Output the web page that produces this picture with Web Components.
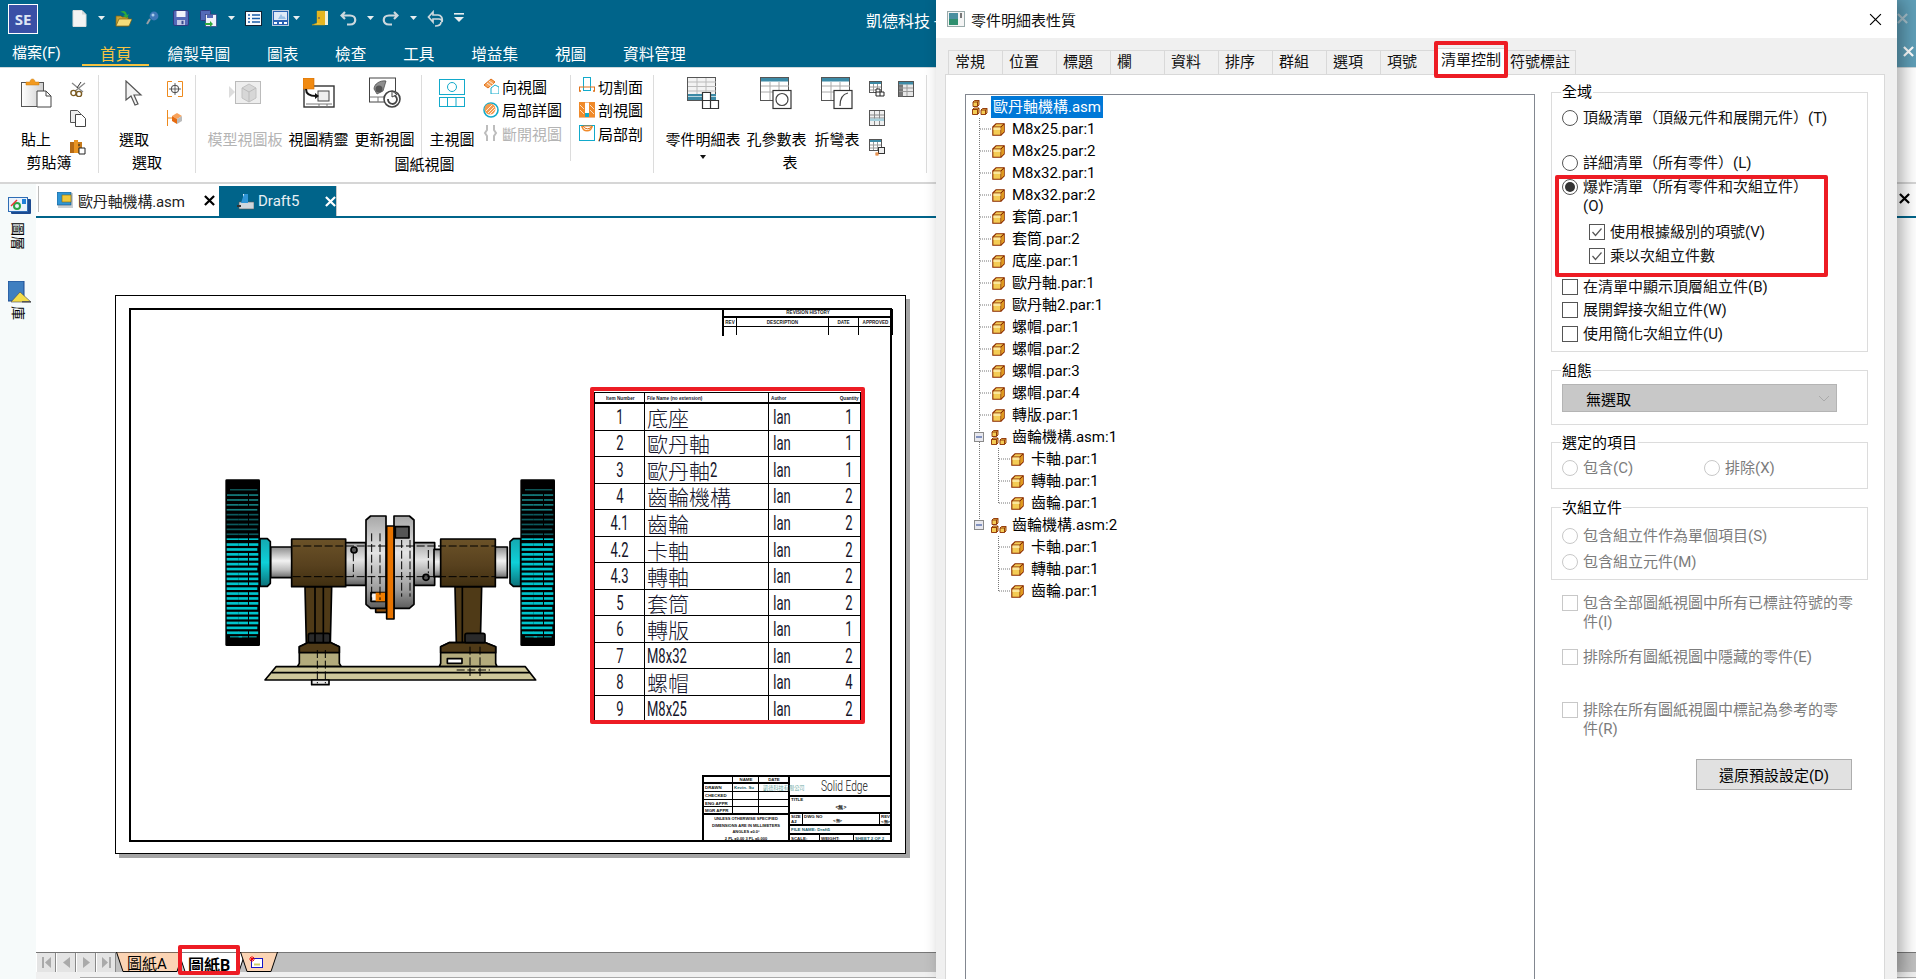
<!DOCTYPE html>
<html lang="zh-Hant">
<head>
<meta charset="utf-8">
<title>Solid Edge</title>
<style>
  html, body { margin: 0; height: 100%; overflow: hidden; background: #fff; }
  body { font-family: Roboto, "Noto Sans CJK TC", sans-serif; font-size: 15px; color: #000; }
</style>
</head>
<body>
<se-app></se-app>
<props-dialog></props-dialog>

<script>
const RED = "#ed1c24";
const TEAL = "#00648a";

// small cube used by the assembly tree icon
const cube = (x, y, s) => `<path d="M${x} ${y + 1.5}l1.500-1.500H${x + s}V${y + s - 1.5}l-1.500 1.500H${x}z"/><path d="M${x} ${y + 1.5}h${s - 1.5}v${s - 1.5}M${x + s - 1.5} ${y + 1.5}l1.500-1.500" fill="none"/>`;

// icon table: name -> [width, height, svg body]
const ICONS = {
  new: [15, 17, `<path d="M1 .5h9l4 4v12H1z" fill="#f3f3f3" stroke="#dcdcdc"/><path d="M10 .5v4h4" fill="#d6d6d6"/>`],
  open: [17, 18, `<path d="M1 17V7h5l1 1h6v9z" fill="#c9a233" stroke="#7b6012" stroke-width=".7"/><path d="M1 17l3-7h13l-3 7z" fill="#f6dd7a" stroke="#7b6012" stroke-width=".7"/><path d="M5 3c4-2 6-1 7 3l2-1-2 4-4-2 2-1c-1-2-3-3-5-3z" fill="#2fa83b"/>`],
  globe: [13, 14, `<circle cx="8" cy="5" r="4.4" fill="#3f78b8"/><circle cx="7" cy="4" r="1.5" fill="#a9cdea"/><path d="M4 8l-3 5" stroke="#9aa0a6" stroke-width="2"/>`],
  save: [16, 16, `<rect x=".5" y=".5" width="15" height="15" rx="1.5" fill="#5469b8" stroke="#2e3c80"/><rect x="3.5" y="1" width="9" height="6" fill="#f0f2fa"/><rect x="4" y="10" width="8" height="5" fill="#c3cae6"/><rect x="8.5" y="10.8" width="2" height="3.4" fill="#3a4a90"/>`],
  saveall: [17, 17, `<rect x=".5" y=".5" width="10" height="10" rx="1" fill="#5469b8" stroke="#2e3c80"/><rect x="5.5" y="4.5" width="11" height="12" fill="#f0f2fa" stroke="#2e3c80" stroke-width=".7"/><rect x="7" y="5" width="6" height="3" fill="#5469b8"/><path d="M5 13h5v-2l3 3-3 3v-2H5z" fill="#2fa83b"/>`],
  list: [17, 15, `<rect x=".5" y=".5" width="16" height="14" fill="#f8fbff" stroke="#123"/><path d="M3 4h2M7 4h8M3 7.5h2M7 7.5h8M3 11h2M7 11h8" stroke="#1a5ea8" stroke-width="1.4"/>`],
  thumb: [17, 16, `<rect x=".5" y=".5" width="16" height="15" fill="#2a63b4" stroke="#bcd"/><rect x="2" y="2" width="13" height="8" fill="#dfeaf7"/><path d="M6 9l3-5 2 3 1-1 2 3z" fill="#9ac0e6"/><path d="M2 12h3v2H2zM7 12h3v2H7zM12 12h3v2h-3z" fill="#fff"/>`],
  door: [16, 16, `<path d="M0 15l5-2V1h8v14z" fill="#f4cf3d" stroke="#b08c10" stroke-width=".6"/><path d="M13 1h3v14h-3z" fill="#f4f0d8"/><path d="M5 1v12l8 2V2z" fill="#e5b520"/><circle cx="7" cy="8" r=".9" fill="#765"/>`],
  undo: [17, 17, `<path d="M5 2L1.5 5.5 5 9M2 5.5h8c7 0 7 9 0 9H7" fill="none" stroke="#cdd8dd" stroke-width="2.2"/>`],
  redo: [17, 17, `<path d="M12 2l3.500 3.500L12 9M15 5.500H7c-7 0-7 9 0 9h3" fill="none" stroke="#cdd8dd" stroke-width="2.2"/>`],
  backfwd: [17, 17, `<path d="M6 2L1.500 7 6 12V9h6c2 0 3 1 3 3 1-4-1-7-4-7H6z" fill="none" stroke="#cdd8dd" stroke-width="1.700"/><path d="M8 16c3 0 6-1 6-4" fill="none" stroke="#cdd8dd" stroke-width="1.700"/>`],
  qatdown: [12, 10, `<path d="M1 .8h10" stroke="#e8eef0" stroke-width="1.600"/><path d="M1 4h10L6 9z" fill="#e8eef0"/>`],
  caret: [7, 4, `<path d="M0 0h7L3.500 4z" fill="#e8eef0"/>`],
  caretd: [6, 4, `<path d="M0 0h6L3 4z" fill="#111"/>`],
  paste: [31, 30, `<defs><linearGradient id="p" x1="0" x2="1"><stop offset="0" stop-color="#fff"/><stop offset="1" stop-color="#cfcfcf"/></linearGradient></defs><rect x=".5" y="4.500" width="22" height="24" fill="url(#p)" stroke="#555"/><path d="M5 7V4h4c0-4 5-4 5 0h4v3z" fill="#f39a1e" stroke="#c77a10" stroke-width=".5"/><path d="M16 13h9l5 5v11H16z" fill="#fff" stroke="#444"/><path d="M25 13v5h5" fill="none" stroke="#444"/>`],
  cut: [16, 16, `<path d="M2 2l11 9M15 2L4 11" stroke="#888" stroke-width="1.300"/><path d="M11 1l-4 6" stroke="#333"/><circle cx="3.500" cy="12" r="2.600" fill="#fff" stroke="#7a5a20" stroke-width="1.400"/><circle cx="9" cy="13" r="2.600" fill="#fff" stroke="#7a5a20" stroke-width="1.400"/>`],
  copy: [16, 17, `<path d="M.5 .5h7l3 3v9H.5z" fill="#eee" stroke="#555"/><path d="M5.500 4.500h6l4 4v8h-10z" fill="#fff" stroke="#444"/>`],
  format: [16, 16, `<rect x="0" y="3" width="4" height="11" fill="#b56a16"/><rect x="4" y="1" width="4" height="13" fill="#e99422"/><rect x="8" y="3" width="4" height="11" fill="#c67a1b"/><path d="M9 9h6v6H9z" fill="#fff" stroke="#222"/><path d="M9 7v-2" stroke="#222"/>`],
  arrow: [18, 26, `<path d="M1 1v19l5-4 4 9 3-1-4-9h7z" fill="#f3f3f3" stroke="#555" stroke-width="1.200"/>`],
  target: [16, 16, `<path d="M5 .5H.5v15H5M11 .5h4.500v15H11" fill="none" stroke="#ee8a1d"/><circle cx="8" cy="8" r="3.800" fill="none" stroke="#444"/><path d="M8 2v12M2 8h12" stroke="#444" stroke-width=".8"/>`],
  attach: [16, 16, `<path d="M.5 0v16M.5 8h5" stroke="#ee8a1d"/><path d="M5 6l5-3 5 3-5 3z" fill="#f8a25a"/><path d="M5 6l5 3v5l-5-3z" fill="#e66b10"/><path d="M15 6l-5 3v5l5-3z" fill="#bbb"/>`],
  palette: [32, 24, `<path d="M0 5l6 6-6 6z" fill="#ddd"/><rect x="6.500" y=".5" width="25" height="22" fill="#eee" stroke="#bbb"/><path d="M13 7l7-4 7 4v10l-7 4-7-4z" fill="#d7d7d7" stroke="#c2c2c2"/><path d="M13 7l7 4 7-4M20 11v10" fill="none" stroke="#bbb"/>`],
  wizard: [32, 30, `<rect x="1" y="8" width="30" height="21" fill="#fff" stroke="#333" stroke-width="1.400"/><path d="M3 26h26" stroke="#777"/><path d="M16 26v3M24 26v3" stroke="#777"/><rect x="15" y="13" width="11" height="10" fill="#eee" stroke="#444"/><rect x="0" y="0" width="11" height="11" fill="#f08a12" stroke="#d06a00" stroke-width=".6"/><path d="M3 11c0 6 5 7 10 7" fill="none" stroke="#111" stroke-width="2"/><path d="M12 15l4 3-4 3z" fill="#111"/>`],
  update: [32, 32, `<rect x=".5" y="1" width="26" height="24" fill="#fff" stroke="#444"/><path d="M1 20h25M9 20v5M17 20v5" stroke="#777"/><path d="M5 12c0-5 6-9 12-8l-3 10-6 3z" fill="#8f8f8f" stroke="#444" stroke-width=".7"/><circle cx="10" cy="12" r="3.500" fill="#555"/><circle cx="23" cy="22" r="8" fill="#fff" stroke="#444" stroke-width="1.600"/><path d="M19 22a4.500 4.500 0 1 0 4-4" fill="none" stroke="#444" stroke-width="1.800"/><path d="M23 14l5 3.500-5 2.500z" fill="#fff" stroke="#444"/>`],
  mainview: [26, 28, `<rect x=".5" y=".5" width="25" height="15" fill="#fff" stroke="#12aacb"/><circle cx="13" cy="8" r="4.500" fill="none" stroke="#12aacb"/><rect x=".5" y="18.500" width="25" height="9" fill="#fff" stroke="#12aacb"/><path d="M8.500 18.500v9M17 18.500v9" stroke="#12aacb"/>`],
  auxview: [16, 16, `<path d="M1 7l7-6 4 3-7 6z" fill="#f6a55c" stroke="#e0711a"/><path d="M4 5l4 3M6 3l4 3" stroke="#fff" stroke-width=".8"/><path d="M8 10l4-3 4 2v7H8z" fill="#fff" stroke="#12aacb"/>`],
  detail: [16, 16, `<circle cx="8" cy="8" r="7" fill="#fff" stroke="#12aacb" stroke-width="1.600"/><circle cx="7" cy="7" r="5.500" fill="#f49a4e"/><path d="M3 9l6-6M5 11l6-6M7 12l5-5" stroke="#fff" stroke-width=".8"/>`],
  broken: [16, 16, `<path d="M4 0v5L2 8l2 3v5M11 0v5l2 3-2 3v5" fill="none" stroke="#bdbdbd" stroke-width="2"/>`],
  cutplane: [16, 18, `<rect x="4.500" y=".5" width="7" height="13" fill="#fff" stroke="#12aacb"/><path d="M0 10h16" stroke="#e0711a"/><path d="M.5 10v4M15.500 10v4" stroke="#e0711a"/><path d="M0 14h2M14 14h2" stroke="#e0711a" stroke-width="1.500"/>`],
  section: [16, 16, `<rect x="0" y="0" width="16" height="15" fill="#fff" stroke="#e0711a"/><rect x="0" y="0" width="6" height="15" fill="#f08a2a"/><rect x="10" y="0" width="6" height="15" fill="#f08a2a"/><rect x="6" y="11" width="4" height="4" fill="#12aacb"/><path d="M1 3l4 4M1 8l4 4M11 3l4 4M11 8l4 4" stroke="#fff" stroke-width=".7"/>`],
  broksec: [16, 16, `<rect x=".5" y=".5" width="15" height="15" fill="#fff" stroke="#12aacb"/><path d="M4 1a5 5 0 0 0 9 0z" fill="#fff" stroke="#e0711a"/><path d="M2 1a6.200 7.500 0 0 0 12 0h-2a4 4 0 0 1-8 0z" fill="#f08a2a"/>`],
  bomtable: [33, 32, `<rect x=".5" y=".5" width="28" height="23" fill="#f3f3f3" stroke="#555"/><path d="M1 5h28M1 9.500h28M1 14h28M10 1v17M19 1v17" stroke="#bbb"/><rect x="1" y="17" width="28" height="6" fill="#3c8aa6"/><path d="M1 19.500h28" stroke="#b9d6e0"/><path d="M15.500 15.500h8v8h8v8h-16z" fill="#fff" stroke="#333" stroke-width="1.200"/><path d="M15.500 23.500h16M23.500 23.500v8" stroke="#333" stroke-width="1.200"/>`],
  holetable: [33, 33, `<rect x=".5" y=".5" width="28" height="23" fill="#fff" stroke="#555"/><rect x="1" y="1" width="27" height="3.500" fill="#3c8aa6"/><path d="M1 9h28M1 15h28M10 5v18M19 5v18" stroke="#aaa"/><rect x="13" y="13.500" width="18" height="18" fill="#fff" stroke="#333" stroke-width="1.200"/><circle cx="22" cy="22.500" r="6" fill="none" stroke="#444" stroke-width="1.200"/>`],
  bendtable: [33, 33, `<rect x=".5" y=".5" width="28" height="23" fill="#fff" stroke="#555"/><rect x="1" y="1" width="27" height="3.500" fill="#3c8aa6"/><path d="M1 9h28M1 15h28M10 5v18M19 5v18" stroke="#aaa"/><rect x="13" y="13.500" width="18" height="18" fill="#fff" stroke="#333" stroke-width="1.200"/><path d="M19 29c0-8 3-12 8-13" fill="none" stroke="#444" stroke-width="1.200"/>`],
  tbl1: [16, 16, `<rect x=".5" y=".5" width="12" height="11" fill="#fff" stroke="#555"/><rect x="1" y="1" width="11" height="2" fill="#3c8aa6"/><path d="M1 6h11M1 9h11M4.500 3v8M8.500 3v8" stroke="#999"/><path d="M7 8h4v3h4v4H7z" fill="#fff" stroke="#222"/><path d="M7 11h4v4" fill="none" stroke="#222"/>`],
  tbl2: [16, 16, `<rect x=".5" y=".5" width="15" height="15" fill="#e8e8e8" stroke="#555"/><rect x="1" y="1" width="14" height="2.500" fill="#3c8aa6"/><rect x="1" y="3.500" width="4" height="12" fill="#777"/><path d="M1 7h14M1 10.500h14M9 3v12" stroke="#999"/>`],
  tbl3: [16, 16, `<rect x=".5" y=".5" width="15" height="15" fill="#f0f0f0" stroke="#555"/><path d="M1 5h14M1 8h14M5.500 1v14M10.500 1v14" stroke="#888"/><rect x="1" y="8.500" width="14" height="2.500" fill="#a7d0dc"/>`],
  tbl4: [16, 17, `<rect x=".5" y=".5" width="12" height="11" fill="#fff" stroke="#555"/><rect x="1" y="1" width="11" height="2" fill="#3c8aa6"/><path d="M1 6h11M1 9h11M4.500 3v8M8.500 3v8" stroke="#999"/><rect x="9.500" y="8.500" width="6" height="6" fill="#eee" stroke="#333"/><rect x="7" y="14" width="2" height="2" fill="#fff" stroke="#e0711a"/>`],
  asmdoc: [16, 16, `<rect x="1" y="1" width="15" height="15" fill="#c9ced2"/><rect x="0" y="0" width="14" height="13" fill="#2e95d6" stroke="#174f7a" stroke-width=".6"/><rect x="5" y="3" width="9" height="7" fill="#f0c83a" stroke="#7a6a15" stroke-width=".6"/>`],
  draftdoc: [17, 17, `<rect x="2" y="9" width="15" height="7" fill="#cfd6dc" stroke="#555" stroke-width=".6"/><path d="M6 1h5v8H6z" fill="#fff"/><path d="M4 10l3-9h4v9z" fill="#2e95d6"/><path d="M0 13h4" stroke="#333" stroke-width="2"/>`],
  layers: [23, 18, `<rect x="3" y="2" width="20" height="15" fill="#1c4a90" rx="1"/><rect x=".5" y=".5" width="19" height="14" fill="#eaf2fb" stroke="#2f6db5"/><rect x="14" y="2" width="4" height="5" fill="#1f80d8"/><circle cx="9" cy="9" r="3" fill="none" stroke="#2aa545" stroke-width="2"/><path d="M3 9l6-6" stroke="#e33" stroke-width="1.500"/>`],
  library: [23, 22, `<rect x="0" y="0" width="16" height="20" fill="#3f7fc0" stroke="#1c4a90"/><path d="M3 21l9-10 11 10z" fill="#f4dd4a" stroke="#445" stroke-width=".6"/><rect x="14" y="20" width="9" height="1.500" fill="#555"/>`],
  sheeticon: [14, 12, `<rect x="2.500" y="2.500" width="11" height="9" fill="#fff" stroke="#1414c8"/><path d="M5 7.500h6v2H5z" fill="#cc6"/><path d="M0 3h6M3 0v6M1 1l4 4M5 1L1 5" stroke="#e00" stroke-width=".9"/>`],
  navfirst: [9, 11, `<path d="M1 0v11" stroke="#aaa" stroke-width="2"/><path d="M9 0v11L3 5.500z" fill="#aaa"/>`],
  navprev: [7, 11, `<path d="M7 0v11L0 5.500z" fill="#aaa"/>`],
  navnext: [7, 11, `<path d="M0 0v11l7-5.500z" fill="#aaa"/>`],
  navlast: [9, 11, `<path d="M8 0v11" stroke="#aaa" stroke-width="2"/><path d="M0 0v11l6-5.500z" fill="#aaa"/>`],
  part: [13, 13, `<path d="M.8 4L4 .8h8.200v8.200L9 12.200H.8z" fill="#f4cc55" stroke="#8a2c00" stroke-width="1.100"/><path d="M.8 4H9v8.200M9 4l3.200-3.200" fill="none" stroke="#8a2c00" stroke-width="1.100"/><path d="M9.500 4.500l2.300-2.500v6.500L9.500 11z" fill="#e19a1c"/><path d="M1.500 4.500H8.500V7H1.500z" fill="#fbe79c"/>`],
  asm: [16, 15, `<g stroke="#8a2c00" fill="#f4cc55" stroke-width=".9">${cube(1, .5, 6)}${cube(.5, 8, 6.500)}${cube(9, 8.500, 6)}</g>`],
  expander: [10, 10, `<rect x=".5" y=".5" width="9" height="9" fill="#e8e8ee" stroke="#8a8a8a"/><path d="M2 5h6" stroke="#1c3c90"/>`],
  dlgicon: [18, 16, `<rect x=".5" y=".5" width="17" height="15" fill="#f4f4f4" stroke="#9aa"/><rect x="2" y="2" width="9" height="12" fill="#2f8f6f"/><rect x="2" y="2" width="9" height="6" fill="#4a90a0"/><rect x="13" y="2" width="2" height="5" fill="#777"/>`],
};

class UiIcon extends HTMLElement {
  connectedCallback() {
    const [w, h, body] = ICONS[this.getAttribute("name")];
    this.attachShadow({ mode: "open" }).innerHTML = `
      <style>:host { display: inline-flex; flex: none; } svg { display: block; }</style>
      <svg width="${w}" height="${h}" viewBox="0 0 ${w} ${h}">${body}</svg>`;
  }
}
customElements.define("ui-icon", UiIcon);

class CloseX extends HTMLElement {
  connectedCallback() {
    const s = this.getAttribute("size") || 12;
    const c = this.getAttribute("color") || "#000";
    const t = this.getAttribute("weight") || 2.4;
    this.attachShadow({ mode: "open" }).innerHTML = `
      <style>:host { display: inline-flex; flex: none; } svg { display: block; }</style>
      <svg width="${s}" height="${s}" viewBox="0 0 12 12"><path d="M1 1l10 10M11 1L1 11" stroke="${c}" stroke-width="${t}"/></svg>`;
  }
}
customElements.define("close-x", CloseX);

class TitleBar extends HTMLElement {
  connectedCallback() {
    // [icon, left margin] in order along the bar
    const qat = [["new", 34], ["caret", 11], ["open", 10], ["globe", 14], ["save", 14], ["saveall", 11], ["caret", 11], ["list", 10], ["thumb", 10], ["caret", 4], ["door", 12], ["undo", 12], ["caret", 10], ["redo", 8], ["caret", 11], ["backfwd", 10], ["qatdown", 9]];
    this.attachShadow({ mode: "open" }).innerHTML = `
      <style>
        :host { display: flex; align-items: center; height: 40px; background: linear-gradient(to right, ${TEAL} 1897px, #5f9fb8 1897px); color: #fff; }
        .logo { width: 28px; height: 28px; margin: -3px 0 0 8px; border: 1px solid #fff; background: #3a50a6; display: flex; align-items: center; justify-content: center; font: bold 15px "Open Sans", sans-serif; color: #dfe6f5; flex: none; }
        .qat { flex: 0 0 828px; display: flex; align-items: center; margin-top: -4px; }
        .title { flex: 1; font-size: 16px; white-space: nowrap; }
        close-x { margin-right: 8px; margin-top: -3px; }
      </style>
      <div class="logo">SE</div>
      <div class="qat">${qat.map(([n, m]) => `<ui-icon name="${n}" style="margin-left:${m}px"></ui-icon>`).join("")}</div>
      <div class="title">凱德科技 -</div>
      <close-x color="#a9c3ce" size="11"></close-x>`;
  }
}
customElements.define("title-bar", TitleBar);

class MenuBar extends HTMLElement {
  connectedCallback() {
    const items = ["首頁", "繪製草圖", "圖表", "檢查", "工具", "增益集", "視圖", "資料管理"];
    this.attachShadow({ mode: "open" }).innerHTML = `
      <style>
        :host { display: flex; height: 28px; box-sizing: border-box; background: linear-gradient(to right, ${TEAL} 1897px, #5f9fb8 1897px); color: #fff; font-size: 15.7px; border-bottom: 1px solid #cfd8dc; }
        .file { flex: 0 0 70px; margin-left: 12px; padding-top: 1px; font-size: 15px; }
        .m { padding: 5px 18px 0; margin-right: .7px; height: 19px; line-height: 20px; white-space: nowrap; }
        .m.on { color: #f5c242; border-bottom: 2px solid #f5c242; margin-right: .2px; }
        .end { margin-left: auto; margin-right: 2px; padding-top: 6px; }
      </style>
      <div class="file">檔案(F)</div>
      ${items.map((t, i) => `<div class="m ${i ? "" : "on"}">${t}</div>`).join("")}
      <close-x class="end" color="#fff" size="11"></close-x>`;
  }
}
customElements.define("menu-bar", MenuBar);

class RbGroup extends HTMLElement {
  connectedCallback() {
    this.attachShadow({ mode: "open" }).innerHTML = `
      <style>
        :host { display: flex; flex-direction: column; flex: none; box-sizing: border-box; width: ${this.getAttribute("w")}px; height: 98px; margin-top: 7px; border-right: 1px solid #dcdcdc; }
        .body { display: flex; height: 86px; }
        .label { margin-top: -6px; height: 20px; line-height: 20px; text-align: center; white-space: nowrap; }
      </style>
      <div class="body"><slot></slot></div>
      <div class="label">${this.getAttribute("label")}</div>`;
  }
}
customElements.define("rb-group", RbGroup);

class RbBig extends HTMLElement {
  connectedCallback() {
    const off = this.hasAttribute("disabled");
    const drop = this.hasAttribute("drop");
    this.attachShadow({ mode: "open" }).innerHTML = `
      <style>
        :host { display: flex; flex-direction: column; align-items: center; flex: none; box-sizing: border-box; width: ${this.getAttribute("w")}px; margin-left: ${this.getAttribute("ml") || 0}px; color: ${off ? "#b4b4b4" : "#000"}; }
        .i { height: 36px; display: flex; align-items: center; margin-bottom: 19px; }
        .t { height: 20px; line-height: 20px; white-space: nowrap; }
        .d { margin-top: 5px; display: flex; }
      </style>
      <div class="i"><ui-icon name="${this.getAttribute("icon")}"></ui-icon></div>
      <div class="t">${this.getAttribute("label")}</div>
      ${drop ? `<div class="d"><ui-icon name="caretd"></ui-icon></div>` : ""}`;
  }
}
customElements.define("rb-big", RbBig);

// column or grid of 16px icon only buttons
class RbTiny extends HTMLElement {
  connectedCallback() {
    const cols = this.getAttribute("cols") || 1;
    this.attachShadow({ mode: "open" }).innerHTML = `
      <style>
        :host { display: grid; grid-template-columns: repeat(${cols}, 16px); grid-auto-rows: 16px; gap: 13px; align-content: start; padding-top: 6px; flex: none; margin-left: ${this.getAttribute("ml") || 0}px; }
      </style><slot></slot>`;
  }
}
customElements.define("rb-tiny", RbTiny);

class RbList extends HTMLElement {
  connectedCallback() {
    this.attachShadow({ mode: "open" }).innerHTML = `
      <style>
        :host { display: flex; flex-direction: column; gap: 3.5px; padding-top: 1px; flex: none; width: ${this.getAttribute("w")}px; margin-left: ${this.getAttribute("ml") || 0}px; }
      </style><slot></slot>`;
  }
}
customElements.define("rb-list", RbList);

class RbRow extends HTMLElement {
  connectedCallback() {
    this.attachShadow({ mode: "open" }).innerHTML = `
      <style>
        :host { display: flex; align-items: center; gap: 3px; height: 20px; white-space: nowrap; color: ${this.hasAttribute("disabled") ? "#b4b4b4" : "#000"}; }
      </style>
      <ui-icon name="${this.getAttribute("icon")}"></ui-icon>${this.getAttribute("label")}`;
  }
}
customElements.define("rb-row", RbRow);

class RbSep extends HTMLElement {
  connectedCallback() {
    this.attachShadow({ mode: "open" }).innerHTML = `
      <style>:host { display: block; width: 1px; height: 86px; background: #dcdcdc; flex: none; margin-left: ${this.getAttribute("ml") || 0}px; }</style>`;
  }
}
customElements.define("rb-sep", RbSep);

class RibbonBar extends HTMLElement {
  connectedCallback() {
    this.attachShadow({ mode: "open" }).innerHTML = `
      <style>
        :host { display: flex; height: 116px; box-sizing: border-box; border-bottom: 2px solid #d6d6d6; background: #fff; }
      </style>
      <rb-group w="99" label="剪貼簿">
        <rb-big w="60" ml="6" icon="paste" label="貼上"></rb-big>
        <rb-tiny ml="4"><ui-icon name="cut"></ui-icon><ui-icon name="copy"></ui-icon><ui-icon name="format"></ui-icon></rb-tiny>
      </rb-group>
      <rb-group w="97" label="選取">
        <rb-big w="60" ml="5" icon="arrow" label="選取"></rb-big>
        <rb-tiny ml="3"><ui-icon name="target"></ui-icon><ui-icon name="attach"></ui-icon></rb-tiny>
      </rb-group>
      <rb-group w="458" label="圖紙視圖">
        <rb-big w="74" ml="12" icon="palette" label="模型視圖板" disabled></rb-big>
        <rb-big w="59" ml="7" icon="wizard" label="視圖精靈"></rb-big>
        <rb-big w="59" ml="7" icon="update" label="更新視圖"></rb-big>
        <rb-sep ml="7"></rb-sep>
        <rb-big w="44" ml="8" icon="mainview" label="主視圖"></rb-big>
        <rb-list w="80" ml="9">
          <rb-row icon="auxview" label="向視圖"></rb-row>
          <rb-row icon="detail" label="局部詳圖"></rb-row>
          <rb-row icon="broken" label="斷開視圖" disabled></rb-row>
        </rb-list>
        <rb-sep ml="7"></rb-sep>
        <rb-list w="66" ml="8">
          <rb-row icon="cutplane" label="切割面"></rb-row>
          <rb-row icon="section" label="剖視圖"></rb-row>
          <rb-row icon="broksec" label="局部剖"></rb-row>
        </rb-list>
      </rb-group>
      <rb-group w="273" label="表">
        <rb-big w="74" ml="12" icon="bomtable" label="零件明細表" drop></rb-big>
        <rb-big w="59" ml="7" icon="holetable" label="孔參數表"></rb-big>
        <rb-big w="44" ml="9" icon="bendtable" label="折彎表"></rb-big>
        <rb-tiny ml="10" cols="2"><ui-icon name="tbl1"></ui-icon><ui-icon name="tbl2"></ui-icon><ui-icon name="tbl3"></ui-icon><span></span><ui-icon name="tbl4"></ui-icon></rb-tiny>
      </rb-group>`;
  }
}
customElements.define("ribbon-bar", RibbonBar);

class SideStrip extends HTMLElement {
  connectedCallback() {
    this.attachShadow({ mode: "open" }).innerHTML = `
      <style>
        :host { display: flex; flex-direction: column; align-items: center; flex: 0 0 36px; background: #f6fafa; padding-top: 13px; box-sizing: border-box; }
        .t { writing-mode: vertical-rl; text-orientation: sideways; font-size: 14px; line-height: 14px; margin-top: 7px; }
        ui-icon { margin-left: 2px; }
        .gap { height: 31px; }
      </style>
      <ui-icon name="layers"></ui-icon>
      <div class="t">圖層</div>
      <div class="gap"></div>
      <ui-icon name="library"></ui-icon>
      <div class="t" style="margin-top:3px">庫</div>`;
  }
}
customElements.define("side-strip", SideStrip);

class DocTabs extends HTMLElement {
  connectedCallback() {
    this.attachShadow({ mode: "open" }).innerHTML = `
      <style>
        :host { display: flex; height: 34px; box-sizing: border-box; border-bottom: 2px solid ${TEAL}; background: #fff; padding-right: 6px; }
        .sep { width: 1px; height: 26px; background: #bbb; margin: 2px 0 0 2px; flex: none; }
        .a, .b { display: flex; align-items: center; white-space: nowrap; font-size: 15px; }
        .a { width: 180px; box-sizing: border-box; padding-left: 18px; height: 32px; }
        .a span { margin-left: 5px; width: 126px; color: #222; letter-spacing: -.15px; }
        .b { width: 118px; box-sizing: border-box; margin-top: 2px; height: 30px; background: ${TEAL}; color: #fff; padding-left: 18px; border-right: 1px solid #c8c8c8; }
        .b span { margin-left: 4px; width: 70px; color: #e8f0f4; }
        .end { margin-left: auto; margin-top: 9px; }
      </style>
      <div class="sep"></div>
      <div class="a"><ui-icon name="asmdoc"></ui-icon><span>歐丹軸機構.asm</span><close-x size="11"></close-x></div>
      <div class="b"><ui-icon name="draftdoc"></ui-icon><span>Draft5</span><close-x size="11" color="#fff"></close-x></div>
      <close-x class="end" size="11"></close-x>`;
  }
}
customElements.define("doc-tabs", DocTabs);

class RevTable extends HTMLElement {
  connectedCallback() {
    this.attachShadow({ mode: "open" }).innerHTML = `
      <style>
        :host { display: grid; grid-template-columns: 13px 92px 30px 34px; grid-template-rows: 9px 9px 9px; width: 169px; height: 27px; box-sizing: border-box; border-left: 2px solid #000; font: bold 4.6px "Liberation Sans", sans-serif; color: #222; }
        div { display: flex; align-items: center; justify-content: center; border-right: 1px solid #000; border-bottom: 1px solid #000; white-space: nowrap; }
        .h { grid-column: 1 / -1; border-bottom: 2px solid #000; }
        .e { border-bottom: 0; height: 8px; }
      </style>
      <div class="h">REVISION HISTORY</div>
      <div>REV</div><div>DESCRIPTION</div><div>DATE</div><div>APPROVED</div>
      <div class="e"></div><div class="e"></div><div class="e"></div><div class="e"></div>`;
  }
}
customElements.define("rev-table", RevTable);

class BomTable extends HTMLElement {
  connectedCallback() {
    const rows = [["1", "底座", 1], ["2", "歐丹軸", 1], ["3", "歐丹軸2", 1], ["4", "齒輪機構", 2], ["4.1", "齒輪", 2], ["4.2", "卡軸", 2], ["4.3", "轉軸", 2], ["5", "套筒", 2], ["6", "轉版", 1], ["7", "M8x32", 2], ["8", "螺帽", 4], ["9", "M8x25", 2]];
    // the drawing font is tall and narrow, so latin runs are squeezed
    const sx = (t) => `<span class="sx">${t}</span>`;
    const name = (t) => t.replace(/[^\x00-\x7f]+/g, (m) => `<b>${m}</b>`).replace(/(^|>)([\x00-\x7f]+)$/, (m, a, b) => `${a}${sx(b)}`);
    this.attachShadow({ mode: "open" }).innerHTML = `
      <style>
        :host { display: grid; grid-template-columns: 50px 124px 67px 26px; grid-template-rows: 11px repeat(12, 26.55px); width: 267px; box-sizing: border-box; border: 1px solid #000; color: #14142a; font: 400 21px Roboto, sans-serif; }
        div { display: flex; align-items: center; box-sizing: border-box; border-right: 1px solid #000; border-bottom: 1px solid #000; white-space: nowrap; }
        div:nth-child(4n) { border-right: 0; }
        .sx { display: inline-block; transform: scaleX(.62); transform-origin: 0 50%; }
        .c { justify-content: center; }
        .c .sx { transform-origin: 50% 50%; }
        .hd { font: bold 6px "Liberation Sans", sans-serif; border-bottom: 2px solid #000; padding-left: 2px; }
        .hd .sx { transform: scaleX(.78); }
        .n { padding-left: 2px; }
        .n b { font: 200 21px "Noto Sans CJK TC", sans-serif; }
        .u { padding-left: 4px; }
      </style>
      <div class="hd c">${sx("Item Number")}</div><div class="hd">${sx("File Name (no extension)")}</div><div class="hd">${sx("Author")}</div><div class="hd c">${sx("Quantity")}</div>
      ${rows.map(([a, b, c]) => `<div class="c">${sx(a)}</div><div class="n">${name(b)}</div><div class="u">${sx("Ian")}</div><div class="c">${sx(c)}</div>`).join("")}`;
  }
}
customElements.define("bom-table", BomTable);

class TitleBlock extends HTMLElement {
  connectedCallback() {
    this.attachShadow({ mode: "open" }).innerHTML = `
      <style>
        :host { display: flex; width: 190px; height: 67px; box-sizing: border-box; border-left: 2px solid #000; border-top: 2px solid #000; font: bold 4.4px "Liberation Sans", sans-serif; color: #111; }
        .l { width: 84px; flex: none; border-right: 2px solid #000; display: flex; flex-direction: column; }
        .r { flex: 1; display: flex; flex-direction: column; position: relative; }
        .row { display: grid; grid-template-columns: 29px 26px 1fr; border-bottom: 1px solid #000; height: 8px; box-sizing: border-box; line-height: 7px; }
        .row span { border-right: 1px solid #000; padding-left: 1px; overflow: hidden; white-space: nowrap; }
        .row span:last-child { border-right: 0; }
        .row.t { height: 7px; border-bottom-width: 2px; text-align: center; line-height: 5px; }
        .note { flex: 1; text-align: center; line-height: 6.500px; padding-top: 1px; font-size: 4px; white-space: nowrap; }
        .brand { height: 20px; box-sizing: border-box; border-bottom: 2px solid #000; display: flex; align-items: center; padding-left: 31px; font: 300 15px Roboto, sans-serif; }
        .brand span { display: inline-block; transform: scaleX(.68); transform-origin: 0 50%; white-space: nowrap; }
        .ttl { height: 18px; box-sizing: border-box; border-bottom: 2px solid #000; padding-left: 1px; position: relative; }
        .mid { position: absolute; left: 0; right: 0; top: 7px; text-align: center; font-size: 5px; }
        .sz { height: 12px; box-sizing: border-box; border-bottom: 2px solid #000; display: grid; grid-template-columns: 13px 1fr 12px; }
        .sz div { border-right: 1px solid #000; position: relative; padding-left: 1px; line-height: 5px; white-space: nowrap; }
        .sz div:last-child { border-right: 0; }
        .fn { height: 9px; box-sizing: border-box; border-bottom: 2px solid #000; padding-left: 1px; line-height: 7px; color: #16606a; }
        .sc { flex: 1; display: grid; grid-template-columns: 30px 34px 1fr; line-height: 7px; white-space: nowrap; }
        .sc div { padding-left: 1px; border-right: 1px solid #000; }
        .sc div:last-child { border: 0; color: #16606a; }
        .co { position: absolute; left: -27px; top: 7px; color: #6ba7a2; font: 400 5.200px "Noto Sans CJK TC", sans-serif; white-space: nowrap; }
      </style>
      <div class="l">
        <div class="row t"><span></span><span>NAME</span><span>DATE</span></div>
        <div class="row"><span>DRAWN</span><span style="color:#16606a">Kevin. Su</span><span></span></div>
        <div class="row"><span>CHECKED</span><span></span><span></span></div>
        <div class="row" style="height:7px"><span>ENG APPR</span><span></span><span></span></div>
        <div class="row" style="border-bottom-width:2px;height:8px"><span>MGR APPR</span><span></span><span></span></div>
        <div class="note">UNLESS OTHERWISE SPECIFIED<br>DIMENSIONS ARE IN MILLIMETERS<br>ANGLES ±0.0°<br>2 PL ±0.00 3 PL ±0.000</div>
      </div>
      <div class="r">
        <div class="co">凱德科技有限公司</div>
        <div class="brand"><span>Solid Edge</span></div>
        <div class="ttl">TITLE<div class="mid">&lt;無&gt;</div></div>
        <div class="sz"><div>SIZE<br>A2</div><div>DWG NO<span style="position:absolute;left:30px;top:4px">&lt;無&gt;</span></div><div>REV<br>&lt;無&gt;</div></div>
        <div class="fn">FILE NAME: Draft5</div>
        <div class="sc"><div>SCALE:</div><div>WEIGHT:</div><div>SHEET 2 OF 2</div></div>
      </div>`;
  }
}
customElements.define("title-block", TitleBlock);

class MachineView extends HTMLElement {
  connectedCallback() {
    const gear = (x) => {
      let s = `<rect x="${x}" y="28" width="104" height="500" rx="4" fill="#000"/>`;
      for (let y = 58, i = 0; y < 500; y += 14.700, i++) {
        let c;
        if (y < 125) c = "#167f80";
        else if (y < 200) c = "#0c5a5e";
        else c = "#00c4cc";
        const inset = y < 70 || y > 485 ? 14 : (y < 90 || y > 470 ? 5 : 4);
        const segs = i % 4 === 0 ? [[inset, 96 - inset]] : [[inset, 36], [40, 28], [71, 30 - inset / 2]];
        const h = y < 70 || y > 485 ? 3 : y > 205 ? 8 : 5;
        s += segs.map(([a, w]) => `<rect x="${x + a}" y="${y}" width="${w}" height="${h}" fill="${c}"/>`).join("");
      }
      return s;
    };
    const dash = (d) => `<path d="${d}" fill="none" stroke="#000" stroke-width="3" stroke-dasharray="24 8"/>`;
    this.attachShadow({ mode: "open" }).innerHTML = `
      <style>:host { display: block; width: 360px; height: 220px; } svg { display: block; }</style>
      <svg width="360" height="220" viewBox="0 0 1080 660">
        <defs>
          <linearGradient id="sil" x1="0" x2="0" y1="0" y2="1"><stop offset="0" stop-color="#8c8c8c"/><stop offset=".45" stop-color="#f2f2f2"/><stop offset=".75" stop-color="#bcbcbc"/><stop offset="1" stop-color="#6a6a6a"/></linearGradient>
          <linearGradient id="flg" x1="0" x2="0" y1="0" y2="1"><stop offset="0" stop-color="#a8a8a8"/><stop offset=".4" stop-color="#e4e4e4"/><stop offset=".8" stop-color="#9c9c9c"/><stop offset="1" stop-color="#5c5c5c"/></linearGradient>
          <linearGradient id="brn" x1="0" x2="0" y1="0" y2="1"><stop offset="0" stop-color="#6b5228"/><stop offset=".55" stop-color="#58411e"/><stop offset="1" stop-color="#3f2e10"/></linearGradient>
          <linearGradient id="tea" x1="0" x2="0" y1="0" y2="1"><stop offset="0" stop-color="#15a8b0"/><stop offset=".5" stop-color="#0ed0d8"/><stop offset="1" stop-color="#0c7078"/></linearGradient>
        </defs>
        <g stroke="#000" stroke-width="5" stroke-linejoin="round">
          <rect x="182" y="231" width="66" height="92" fill="url(#sil)"/>
          <rect x="852" y="231" width="40" height="92" fill="url(#sil)"/>
          <rect x="405" y="218" width="62" height="128" fill="url(#flg)"/>
          <rect x="612" y="218" width="62" height="128" fill="url(#flg)"/>
          <rect x="672" y="238" width="24" height="82" fill="url(#sil)"/>
          <path d="M150 206h22l9 9v125l-9 9h-22z" fill="url(#tea)"/>
          <path d="M932 206h-22l-10 9v125l10 9h22z" fill="url(#tea)"/>
          <path d="M285 350h80l-4 170H289z" fill="#4f3a17"/>
          <path d="M735 350h80l-4 170h-72z" fill="#4f3a17"/>
          <rect x="245" y="207" width="162" height="143" fill="url(#brn)"/>
          <rect x="692" y="207" width="164" height="143" fill="url(#brn)"/>
          <path d="M268 530l25-12h70l25 12v50l6 10H262l6-10z" fill="#b3ab7c"/>
          <path d="M268 530l25-12h70l25 12v18H268z" fill="#4f3a17"/>
          <path d="M692 530l25-12h110l30 12v50l4 10H688l4-10z" fill="#b3ab7c"/>
          <path d="M692 530l25-12h110l30 12v18H692z" fill="#4f3a17"/>
          <rect x="712" y="566" width="44" height="14" fill="#fff"/>
          <path d="M165 630l33-40h748l31 40z" fill="#cfc89a"/>
          <path d="M185 608h775" fill="none"/>
          <rect x="305" y="630" width="52" height="14" fill="#e8e8e8"/>
          <rect x="295" y="490" width="65" height="28" rx="6" fill="#2a2a2a"/>
          <rect x="765" y="490" width="60" height="28" rx="6" fill="#2a2a2a"/>
          <rect x="497" y="393" width="40" height="34" fill="#8a4f10"/>
          <path d="M468 150l14-12h46v277h-46l-14-12z" fill="url(#flg)"/>
          <path d="M612 150l-14-12h-46v277h46l14-12z" fill="url(#flg)"/>
          <rect x="530" y="168" width="22" height="279" fill="#e87400"/>
          <rect x="556" y="170" width="41" height="34" fill="#555"/>
          <rect x="483" y="368" width="42" height="26" fill="#f5f5f5"/>
          <rect x="497" y="368" width="28" height="26" fill="#ee7c00" stroke="none"/>
          <circle cx="432" cy="240" r="9" fill="#555"/>
          <circle cx="648" cy="322" r="9" fill="#555"/>
          <path d="M315 350v168M340 350v168M757 350v168" fill="none"/>
        </g>
        ${gear(46)}${gear(931)}
        ${dash("M248 228H530M556 228h300M248 320H530M556 320h300")}
        ${dash("M485 190v200M510 190v200M575 210v170M600 210v170")}
        ${dash("M430 250v70M655 240v70M322 540v100M346 540v100M780 530v90M810 530v90")}
        ${dash("M740 600h100")}
      </svg>`;
  }
}
customElements.define("machine-view", MachineView);

class DraftSheet extends HTMLElement {
  connectedCallback() {
    this.attachShadow({ mode: "open" }).innerHTML = `
      <style>
        :host { display: block; width: 791px; height: 559px; box-sizing: border-box; margin: 77px 0 0 79px; padding: 12px 13px 11px 13px; border: 1px solid #000; background: #fff; box-shadow: 4px 4px 0 #a4a4a4; }
        .frame { position: relative; height: 100%; box-sizing: border-box; border: 2px solid #000; }
        rev-table { position: absolute; right: -1px; top: -1px; }
        machine-view { position: absolute; left: 79px; top: 160px; }
        bom-table { position: absolute; left: 463px; top: 82px; }
        .red { position: absolute; left: 459px; top: 77px; width: 275px; height: 337px; box-sizing: border-box; border: 4px solid ${RED}; border-radius: 2px; }
        title-block { position: absolute; right: -2px; bottom: -2px; }
      </style>
      <div class="frame">
        <rev-table></rev-table>
        <machine-view></machine-view>
        <bom-table></bom-table>
        <div class="red"></div>
        <title-block></title-block>
      </div>`;
  }
}
customElements.define("draft-sheet", DraftSheet);

class SheetTab extends HTMLElement {
  connectedCallback() {
    const on = this.hasAttribute("active");
    const w = +this.getAttribute("w");
    this.attachShadow({ mode: "open" }).innerHTML = `
      <style>
        :host { display: grid; width: ${w}px; height: 20px; flex: none; margin-right: -6px; position: relative; }
        svg, .t { grid-area: 1 / 1; }
        .t { display: flex; align-items: center; justify-content: center; font-size: ${on ? 16 : 15}px; padding-right: 6px; ${on ? "font-weight: 700;" : ""} }
        .red { position: absolute; left: 0; right: 6px; top: -7px; bottom: -3px; border: 4px solid ${RED}; border-radius: 2px; }
      </style>
      <svg width="${w}" height="20" viewBox="0 0 ${w} 20"><path d="M.5 0L7 19.500H${w - 7}L${w - .5} 0z" fill="${on ? "#fff" : "#fbd4b4"}" stroke="#000"/></svg>
      <div class="t"><slot></slot></div>
      ${on ? `<div class="red"></div>` : ""}`;
  }
}
customElements.define("sheet-tab", SheetTab);

class SheetTabs extends HTMLElement {
  connectedCallback() {
    const nav = ["navfirst", "navprev", "navnext", "navlast"];
    this.attachShadow({ mode: "open" }).innerHTML = `
      <style>
        :host { display: block; height: 27px; background: #f0f0f0; }
        .bar { display: flex; height: 20px; background: #c0c0c0; border-top: 1px solid #777; box-sizing: border-box; }
        .nav { display: flex; width: 80px; flex: none; }
        .nav div { flex: 1; background: #e4e4e4; border-right: 1px solid #888; border-left: 1px solid #fff; display: flex; align-items: center; justify-content: center; }
        .tabs { display: flex; margin-top: -1px; }
        .sb { height: 2px; margin: 5px 0 0 44px; border-top: 1px solid #aaa; background: #fff; }
      </style>
      <div class="bar">
        <div class="nav">${nav.map((n) => `<div><ui-icon name="${n}"></ui-icon></div>`).join("")}</div>
        <div class="tabs">
          <sheet-tab w="68">圖紙A</sheet-tab>
          <sheet-tab w="68" active>圖紙B</sheet-tab>
          <sheet-tab w="38"><ui-icon name="sheeticon"></ui-icon></sheet-tab>
        </div>
      </div>
      <div class="sb"></div>`;
  }
}
customElements.define("sheet-tabs", SheetTabs);

class SeApp extends HTMLElement {
  connectedCallback() {
    this.attachShadow({ mode: "open" }).innerHTML = `
      <style>
        :host { display: flex; flex-direction: column; width: 1916px; height: 979px; overflow: hidden; }
        .work { flex: 1; display: flex; min-height: 0; }
        .main { flex: 1; display: flex; flex-direction: column; min-width: 0; }
        .canvas { flex: 1; min-height: 0; background: #fff; }
      </style>
      <title-bar></title-bar>
      <menu-bar></menu-bar>
      <ribbon-bar></ribbon-bar>
      <div class="work">
        <side-strip></side-strip>
        <div class="main">
          <doc-tabs></doc-tabs>
          <div class="canvas"><draft-sheet></draft-sheet></div>
          <sheet-tabs></sheet-tabs>
        </div>
      </div>`;
  }
}
customElements.define("se-app", SeApp);

/* ---- dialog ---- */

class DlgTabs extends HTMLElement {
  connectedCallback() {
    const tabs = ["常規", "位置", "標題", "欄", "資料", "排序", "群組", "選項", "項號"];
    this.attachShadow({ mode: "open" }).innerHTML = `
      <style>
        :host { display: flex; height: 24px; margin: 12px 0 0 12px; position: relative; z-index: 1; }
        div { box-sizing: border-box; height: 24px; border: 1px solid #d9d9d9; border-right: 0; border-bottom: 0; padding-left: 6px; line-height: 23px; white-space: nowrap; width: 54px; color: #111; }
        .on { width: 72px; padding-left: 6px; height: 27px; margin-top: -2px; background: #fff; line-height: 23px; }
        .x { width: 70px; padding-left: 3px; border-right: 1px solid #d9d9d9; }
        .red { position: absolute; left: 486px; top: -9px; width: 74px; height: 37px; box-sizing: border-box; border: 4px solid ${RED}; border-radius: 2px; background: none; padding: 0; }
      </style>
      ${tabs.map((t) => `<div>${t}</div>`).join("")}
      <div class="on">清單控制</div>
      <div class="x">符號標註</div>
      <div class="red"></div>`;
  }
}
customElements.define("dlg-tabs", DlgTabs);

class TreeNode extends HTMLElement {
  connectedCallback() {
    const depth = +this.getAttribute("depth");
    const kind = this.getAttribute("kind") || "part";
    const a = this.getAttribute("a");   // outer guide: full | half | none
    const b = this.getAttribute("b");   // inner guide: full | half | none
    const dots = (d) => `<path d="${d}" stroke="#777" stroke-dasharray="1 1" fill="none"/>`;
    let g = "";
    if (a === "full") g += dots("M13.500 0v22");
    if (a === "half") g += dots("M13.500 0v11");
    if (b === "full") g += dots("M32.500 0v22");
    if (b === "half") g += dots("M32.500 0v11");
    if (depth === 1 && kind === "part") g += dots("M14 11h11");
    if (depth === 2) g += dots("M33 11h12");
    const pad = depth === 0 ? 6 : kind === "asm" ? 25 : depth === 1 ? 26 : 45;
    const textLeft = depth === 0 ? 3 : depth === 2 ? 7 : kind === "asm" ? 5 : 7;
    const sel = this.hasAttribute("selected");
    this.attachShadow({ mode: "open" }).innerHTML = `
      <style>
        :host { display: grid; height: 22px; position: relative; }
        svg.g { position: absolute; left: 0; top: 0; }
        .row { display: flex; align-items: center; padding-left: ${pad}px; height: 22px; }
        .t { margin-left: ${textLeft}px; line-height: 22px; padding: 0 ${sel ? "2px" : "0"}; white-space: nowrap; ${sel ? "background:#0078d7;color:#fff;" : ""} }
        .ex { position: absolute; left: 8px; top: 6px; }
      </style>
      <svg class="g" width="60" height="22">${g}</svg>
      ${kind === "asm" && depth === 1 ? `<ui-icon class="ex" name="expander"></ui-icon>` : ""}
      <div class="row"><ui-icon name="${kind}"></ui-icon><span class="t"><slot></slot></span></div>`;
  }
}
customElements.define("tree-node", TreeNode);

class PartTree extends HTMLElement {
  connectedCallback() {
    const first = ["M8x25.par:1", "M8x25.par:2", "M8x32.par:1", "M8x32.par:2", "套筒.par:1", "套筒.par:2", "底座.par:1", "歐丹軸.par:1", "歐丹軸2.par:1", "螺帽.par:1", "螺帽.par:2", "螺帽.par:3", "螺帽.par:4", "轉版.par:1"];
    const subs = ["卡軸.par:1", "轉軸.par:1", "齒輪.par:1"];
    const sub = (outer) => subs.map((s, i) => `<tree-node depth="2" a="${outer}" b="${i === 2 ? "half" : "full"}">${s}</tree-node>`).join("");
    this.attachShadow({ mode: "open" }).innerHTML = `
      <style>
        :host { display: block; width: 570px; flex: none; box-sizing: border-box; margin: 19px 0 0 19px; padding-top: 1px; background: #fff; border: 1px solid #828790; border-bottom: 0; }
      </style>
      <tree-node depth="0" kind="asm" selected>歐丹軸機構.asm</tree-node>
      ${first.map((s) => `<tree-node depth="1" a="full">${s}</tree-node>`).join("")}
      <tree-node depth="1" kind="asm" a="full">齒輪機構.asm:1</tree-node>
      ${sub("full")}
      <tree-node depth="1" kind="asm" a="half">齒輪機構.asm:2</tree-node>
      ${sub("none")}`;
  }
}
customElements.define("part-tree", PartTree);

class OptGroup extends HTMLElement {
  connectedCallback() {
    this.attachShadow({ mode: "open" }).innerHTML = `
      <style>
        :host { display: block; margin-top: ${this.getAttribute("mt") || 0}px; }
        fieldset { margin: 0; padding: 0 10px ${this.getAttribute("pb") || 7}px; border: 1px solid #dcdcdc; display: block; min-width: 0; }
        legend { padding: 0 1px; margin-left: -1px; line-height: 20px; height: 20px; font-size: 15px; }
      </style>
      <fieldset><legend>${this.getAttribute("label")}</legend><slot></slot></fieldset>`;
  }
}
customElements.define("opt-group", OptGroup);

class OptItem extends HTMLElement {
  connectedCallback() {
    const radio = this.getAttribute("type") === "radio";
    const on = this.hasAttribute("checked");
    const off = this.hasAttribute("disabled");
    const line = off ? "#c8c8c8" : "#555";
    const mark = radio
      ? `<circle cx="8" cy="8" r="7.500" fill="#fff" stroke="${line}"/>${on ? `<circle cx="8" cy="8" r="5" fill="#333"/>` : ""}`
      : `<rect x=".5" y=".5" width="15" height="15" fill="#fff" stroke="${line}"/>${on ? `<path d="M3.500 8l3 3.500 6-7" fill="none" stroke="#555" stroke-width="1.200"/>` : ""}`;
    this.attachShadow({ mode: "open" }).innerHTML = `
      <style>
        :host { display: flex; gap: 5px; margin-top: ${this.getAttribute("mt") || 0}px; margin-left: ${this.getAttribute("ml") || 0}px; line-height: 19px; white-space: nowrap; color: ${off ? "#7c7c7c" : "#111"}; ${this.getAttribute("w") ? `width:${this.getAttribute("w")}px;` : ""} }
        svg { flex: none; margin-top: 1px; }
      </style>
      <svg width="16" height="16" viewBox="0 0 16 16">${mark}</svg>
      <div><slot></slot></div>`;
  }
}
customElements.define("opt-item", OptItem);

class OptionsPane extends HTMLElement {
  connectedCallback() {
    this.attachShadow({ mode: "open" }).innerHTML = `
      <style>
        :host { display: flex; flex-direction: column; position: relative; flex: none; width: 317px; box-sizing: border-box; margin-left: 16px; margin-top: 7px; }
        .red { position: absolute; left: 4px; top: 93px; width: 273px; height: 102px; box-sizing: border-box; border: 4px solid ${RED}; border-radius: 2px; }
        .in { margin-left: 11px; }
        .combo { box-sizing: border-box; width: 275px; height: 28px; margin-top: 3.500px; background: #c8c8c8; border: 1px solid #b4b4b4; display: flex; align-items: center; justify-content: space-between; padding: 0 6px 0 23px; }
        .two { display: flex; margin-top: 6px; }
        button { align-self: flex-end; width: 156px; height: 31px; margin: 20.300px 16px 0 0; padding: 0; background: #e1e1e1; border: 1px solid #adadad; font: inherit; color: #000; }
      </style>
      <opt-group label="全域" pb="7">
        <opt-item type="radio" mt="7">頂級清單（頂級元件和展開元件）(T)</opt-item>
        <opt-item type="radio" mt="26">詳細清單（所有零件）(L)</opt-item>
        <opt-item type="radio" mt="5" checked>爆炸清單（所有零件和次組立件）<br>(O)</opt-item>
        <opt-item mt="7" ml="27" checked>使用根據級別的項號(V)</opt-item>
        <opt-item mt="5" ml="27" checked>乘以次組立件數</opt-item>
        <opt-item mt="12">在清單中顯示頂層組立件(B)</opt-item>
        <opt-item mt="4">展開銲接次組立件(W)</opt-item>
        <opt-item mt="5">使用簡化次組立件(U)</opt-item>
      </opt-group>
      <opt-group label="組態" mt="8.500" pb="12">
        <div class="combo"><span>無選取</span><svg width="12" height="7" viewBox="0 0 12 7"><path d="M1 1l5 5 5-5" fill="none" stroke="#aaa"/></svg></div>
      </opt-group>
      <opt-group label="選定的項目" mt="7.500" pb="10">
        <div class="two">
          <opt-item type="radio" disabled w="142">包含(C)</opt-item>
          <opt-item type="radio" disabled>排除(X)</opt-item>
        </div>
      </opt-group>
      <opt-group label="次組立件" mt="9" pb="7">
        <opt-item type="radio" disabled mt="9">包含組立件作為單個項目(S)</opt-item>
        <opt-item type="radio" disabled mt="7">包含組立元件(M)</opt-item>
      </opt-group>
      <div class="in">
        <opt-item disabled mt="14.700">包含全部圖紙視圖中所有已標註符號的零<br>件(I)</opt-item>
        <opt-item disabled mt="16">排除所有圖紙視圖中隱藏的零件(E)</opt-item>
        <opt-item disabled mt="34">排除在所有圖紙視圖中標記為參考的零<br>件(R)</opt-item>
      </div>
      <button>還原預設設定(D)</button>
      <div class="red"></div>`;
  }
}
customElements.define("options-pane", OptionsPane);

class PropsDialog extends HTMLElement {
  connectedCallback() {
    this.attachShadow({ mode: "open" }).innerHTML = `
      <style>
        :host { position: absolute; left: 936px; top: 0; width: 961px; height: 979px; display: flex; flex-direction: column; background: #f0f0f0; box-shadow: 6px 0 16px rgba(0,0,0,.32); color: #000; }
        .head { height: 38px; background: #fff; display: flex; align-items: center; padding: 0 15px 0 11px; flex: none; }
        .head span { margin-left: 6px; flex: 1; color: #111; }
        .page { flex: 1; display: flex; margin: 0 12px 0 9px; background: #fff; border: 1px solid #d9d9d9; border-bottom: 0; min-height: 0; }
      </style>
      <div class="head"><ui-icon name="dlgicon"></ui-icon><span>零件明細表性質</span><close-x size="13" weight="1.100"></close-x></div>
      <dlg-tabs></dlg-tabs>
      <div class="page">
        <part-tree></part-tree>
        <options-pane></options-pane>
      </div>`;
  }
}
customElements.define("props-dialog", PropsDialog);
</script>
</body>
</html>
